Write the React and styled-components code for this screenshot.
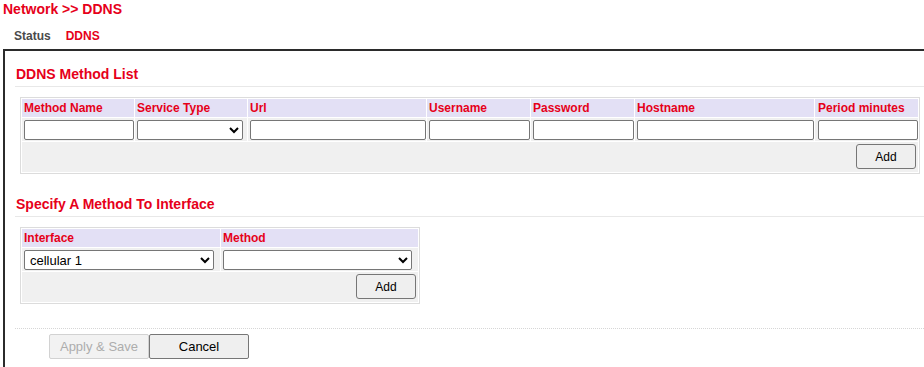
import React from "react";
import styled, { createGlobalStyle } from "styled-components";

const RED = "#e6001a";

const Global = createGlobalStyle`
  html, body {
    margin: 0;
    padding: 0;
    background: #fff;
    overflow: hidden;
    font-family: "Liberation Sans", Arial, sans-serif;
  }
`;

const Page = styled.div`
  padding: 1px 0 0 3px;
`;

const Title = styled.h1`
  margin: 0;
  font-size: 14px;
  line-height: 16px;
  font-weight: bold;
  color: ${RED};
`;

const TabBar = styled.nav`
  display: flex;
  gap: 15px;
  margin-top: 11px;
  padding-left: 11px;
`;

const Tab = styled.span`
  font-size: 12px;
  line-height: 16px;
  font-weight: bold;
  color: ${(p) => (p.$active ? RED : "#4a4a4a")};
`;

const Panel = styled.div`
  margin-top: 5px;
  border-top: 2px solid #2b2b2b;
  border-left: 2px solid #2b2b2b;
  padding: 0 0 30px 10px;
`;

const SectionTitle = styled.h2`
  margin: ${(p) => p.$top}px 0 0;
  padding: 0 0 4px 1px;
  border-bottom: 1px solid #e8e8e8;
  font-size: 14px;
  line-height: 16px;
  font-weight: bold;
  color: ${RED};
`;

const Table = styled.table`
  box-sizing: border-box;
  margin: 10px 0 0 5px;
  width: ${(p) => p.$w}px;
  table-layout: fixed;
  border-collapse: separate;
  border-spacing: 1px;
  border: 1px solid #dcdcdc;
  background: #fff;
`;

const Th = styled.th`
  box-sizing: border-box;
  width: ${(p) => p.$w}px;
  height: 18px;
  padding: 0 0 0 ${(p) => p.$pl || 2}px;
  background: #e3e0f5;
  color: ${RED};
  font-size: 12px;
  font-weight: bold;
  text-align: left;
  white-space: nowrap;
  overflow: hidden;
`;

const Td = styled.td`
  background: #f0f0f0;
  padding: 2px 0 1px ${(p) => p.$pl || 2}px;
  height: 20px;
`;

const FooterCell = styled.td`
  background: #f0f0f0;
  padding: 2px 2px 3px;
  text-align: right;
`;

const TextInput = styled.input`
  display: block;
  box-sizing: border-box;
  width: ${(p) => p.$w}px;
  height: 20px;
  margin: 0;
  padding: 1px 3px;
  border: 1px solid #767676;
  border-radius: 2px;
  background: #fff;
  font-family: "Liberation Sans", Arial, sans-serif;
  font-size: 13px;
`;

const Select = styled.select`
  display: block;
  box-sizing: border-box;
  width: ${(p) => p.$w}px;
  height: 20px;
  margin: 0;
  padding: 0 1px;
  border: 1px solid #767676;
  border-radius: 2px;
  background-color: #fff;
  color: #000;
  font-family: "Liberation Sans", Arial, sans-serif;
  font-size: 13px;
`;

const SmallButton = styled.button`
  box-sizing: border-box;
  width: 60px;
  height: 25px;
  margin: 0;
  padding: 0;
  border: 1px solid #767676;
  border-radius: 3px;
  background: #efefef;
  color: #000;
  font-family: "Liberation Sans", Arial, sans-serif;
  font-size: 12px;
`;

const Divider = styled.div`
  margin-top: 24px;
  border-top: 1px dotted #d6d6d6;
`;

const ActionBar = styled.div`
  display: flex;
  margin: 5px 0 0 34px;
`;

const ActionButton = styled.button`
  box-sizing: border-box;
  width: 100px;
  height: 25px;
  margin: 0;
  padding: 0;
  border: 1px solid ${(p) => (p.disabled ? "#d2d2d2" : "#767676")};
  border-radius: 2px;
  background: ${(p) => (p.disabled ? "#f2f2f2" : "#efefef")};
  color: ${(p) => (p.disabled ? "#adadad" : "#000")};
  font-family: "Liberation Sans", Arial, sans-serif;
  font-size: 13px;
`;

const methodCols = [
  { label: "Method Name", w: 112, input: "text", iw: 110 },
  { label: "Service Type", w: 112, input: "select", iw: 106 },
  { label: "Url", w: 178, input: "text", iw: 176 },
  { label: "Username", w: 103, input: "text", iw: 101 },
  { label: "Password", w: 103, input: "text", iw: 101 },
  { label: "Hostname", w: 179, input: "text", iw: 177 },
  { label: "Period minutes", w: 103, input: "text", iw: 100, pl: 3 },
];

export default function App() {
  return (
    <>
      <Global />
      <Page>
        <Title>Network &gt;&gt; DDNS</Title>
        <TabBar>
          <Tab>Status</Tab>
          <Tab $active>DDNS</Tab>
        </TabBar>
        <Panel>
          <SectionTitle $top={15}>DDNS Method List</SectionTitle>
          <Table $w={900}>
            <thead>
              <tr>
                {methodCols.map((c) => (
                  <Th key={c.label} $w={c.w} $pl={c.pl}>
                    {c.label}
                  </Th>
                ))}
              </tr>
            </thead>
            <tbody>
              <tr>
                {methodCols.map((c) => (
                  <Td key={c.label} $pl={c.pl}>
                    {c.input === "select" ? (
                      <Select $w={c.iw} defaultValue="">
                        <option value=""></option>
                      </Select>
                    ) : (
                      <TextInput $w={c.iw} type="text" />
                    )}
                  </Td>
                ))}
              </tr>
              <tr>
                <FooterCell colSpan={7}>
                  <SmallButton>Add</SmallButton>
                </FooterCell>
              </tr>
            </tbody>
          </Table>

          <SectionTitle $top={22}>Specify A Method To Interface</SectionTitle>
          <Table $w={400}>
            <thead>
              <tr>
                <Th $w={198}>Interface</Th>
                <Th $w={197}>Method</Th>
              </tr>
            </thead>
            <tbody>
              <tr>
                <Td>
                  <Select $w={190} defaultValue="cellular1">
                    <option value="cellular1">cellular 1</option>
                  </Select>
                </Td>
                <Td>
                  <Select $w={189} defaultValue="">
                    <option value=""></option>
                  </Select>
                </Td>
              </tr>
              <tr>
                <FooterCell colSpan={2}>
                  <SmallButton>Add</SmallButton>
                </FooterCell>
              </tr>
            </tbody>
          </Table>

          <Divider />
          <ActionBar>
            <ActionButton disabled>Apply &amp; Save</ActionButton>
            <ActionButton>Cancel</ActionButton>
          </ActionBar>
        </Panel>
      </Page>
    </>
  );
}
